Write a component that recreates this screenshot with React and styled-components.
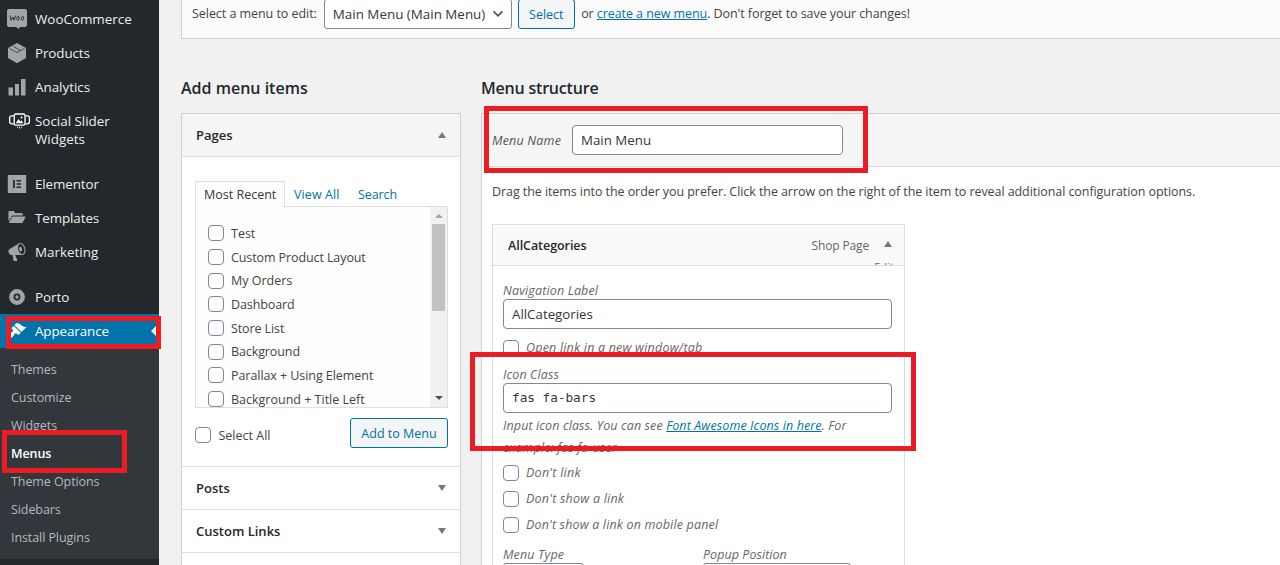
import styled, { createGlobalStyle, css } from "styled-components";

const GlobalStyle = createGlobalStyle`
  * {
    box-sizing: border-box;
  }

  body {
    margin: 0;
    background: #f1f1f1;
    color: #444;
    font-family: "Open Sans", "Noto Sans", sans-serif;
    font-size: 12.5px;
    line-height: 18px;
    overflow: hidden;
  }
`;

const Page = styled.div`
  position: relative;
  display: flex;
  width: 1280px;
  height: 565px;
  overflow: hidden;
`;

const Text = styled.span`
  letter-spacing: ${({ $ls }) => $ls || 0}px;
  white-space: nowrap;
`;

/* admin menu */

const Sidebar = styled.nav`
  flex: none;
  width: 159px;
  padding-top: 2px;
  background: #23282d;
`;

const MenuRow = styled.div`
  display: flex;
  align-items: flex-start;
  min-height: 34px;
  padding: 8px 0;
  color: #eee;
  font-size: 13.4px;
  line-height: 18px;

  svg {
    flex: none;
    width: 20px;
    height: 20px;
    margin: -1px 8px -1px 7px;
    fill: #a0a5aa;
    overflow: visible;
  }

  ${({ $current }) =>
    $current &&
    css`
      background: #0073aa;
      color: #fff;

      svg {
        fill: #fff;
      }

      &::after {
        content: "";
        align-self: center;
        margin-left: auto;
        border: 8px solid transparent;
        border-right-color: #f1f1f1;
        border-left: 0;
      }
    `}
`;

const Separator = styled.div`
  height: 11px;
`;

const Submenu = styled.div`
  height: 211px;
  padding: 8px 0 7px 11px;
  background: #32373c;
`;

const SubmenuItem = styled.div`
  color: ${({ $current }) => ($current ? "#fff" : "#b4b9be")};
  font-weight: ${({ $current }) => ($current ? 600 : 400)};
  line-height: 28px;
`;

/* content */

const Content = styled.main`
  flex: none;
  width: 1121px;
  padding-left: 22px;
`;

const ManageMenus = styled.div`
  display: flex;
  align-items: center;
  height: 39px;
  padding: 0 0 11px 10px;
  border: 1px solid #ccd0d4;
  border-top: 0;
  border-right: 0;
  background: #fbfbfb;
`;

const MenuSelect = styled.div`
  display: flex;
  align-items: center;
  justify-content: space-between;
  width: 188px;
  height: 30px;
  margin: 0 6px 0 7px;
  padding: 0 7px 0 8px;
  border: 1px solid #7e8993;
  border-radius: 3px;
  background: #fff;
  color: #32373c;
  font-size: 13.4px;

  svg {
    width: 12px;
    height: 8px;
    fill: none;
    stroke: #555;
    stroke-width: 2;
  }
`;

const Button = styled.div`
  width: ${({ $width }) => $width}px;
  height: 30px;
  border: 1px solid #0071a1;
  border-radius: 3px;
  background: #f3f5f6;
  color: #0071a1;
  line-height: 29px;
  text-align: center;
`;

const Link = styled.a`
  color: #0073aa;
  text-decoration: underline;
`;

const Columns = styled.div`
  display: flex;
  gap: 20px;
  padding-top: 38px;
`;

const Column = styled.section`
  flex: none;
  width: ${({ $width }) => $width}px;
`;

const Heading = styled.h2`
  margin: 0 0 14px;
  color: #23282d;
  font-size: 16px;
  font-weight: 600;
  line-height: 22px;
`;

const Accordion = styled.div`
  height: 470px;
  border: 1px solid #ccd0d4;
  background: #fff;
`;

const AccordionTitle = styled.div`
  display: flex;
  align-items: center;
  justify-content: space-between;
  height: 43px;
  padding: 0 14px;
  border-bottom: 1px solid #dfdfdf;
  background: ${({ $open }) => ($open ? "#f5f5f5" : "#fff")};
  color: #23282d;
  font-size: 13px;
  font-weight: 600;
`;

const Arrow = styled.i`
  border: 4px solid transparent;
  border-top: ${({ $up }) => ($up ? "0" : "6px solid #72777c")};
  border-bottom: ${({ $up }) => ($up ? "6px solid #72777c" : "0")};
`;

const AccordionBody = styled.div`
  height: 310px;
  padding: 24px 12px 0 13px;
  border-bottom: 1px solid #dfdfdf;
`;

const Tabs = styled.div`
  display: flex;
  height: 26px;
  line-height: 28px;
`;

const Tab = styled.div`
  width: ${({ $width }) => $width}px;
  padding-left: ${({ $current }) => ($current ? 8 : 9)}px;
  color: #0073aa;

  ${({ $current }) =>
    $current &&
    css`
      z-index: 1;
      height: 27px;
      border: 1px solid #dfdfdf;
      border-bottom: 0;
      background: #fdfdfd;
      color: #32373c;
      line-height: 26px;
    `}
`;

const TabPanel = styled.div`
  display: flex;
  justify-content: space-between;
  height: 202px;
  margin-top: -1px;
  border: 1px solid #dfdfdf;
  background: #fdfdfd;
  overflow: hidden;
`;

const PageList = styled.div`
  padding: 14.4px 0 0 12px;
`;

const PageOption = styled.label`
  display: flex;
  align-items: center;
  gap: 7px;
  height: 23.7px;

  span {
    padding-top: 1.4px;
  }
`;

const Checkbox = styled.i`
  flex: none;
  width: 16px;
  height: 16px;
  border: 1px solid #7e8993;
  border-radius: 4px;
  background: #fff;
`;

const Scrollbar = styled.div`
  display: flex;
  flex-direction: column;
  align-items: center;
  width: 17px;
  padding: 7px 0 7px;
  background: #f1f1f1;
`;

const ScrollArrow = styled.i`
  border: 4px solid transparent;
  border-top: ${({ $up }) => ($up ? "0" : "4px solid #505050")};
  border-bottom: ${({ $up }) => ($up ? "4px solid #a3a3a3" : "0")};
`;

const Thumb = styled.div`
  width: 13px;
  height: 87px;
  margin: 6px 0 auto;
  background: #c1c1c1;
`;

const AddRow = styled.div`
  display: flex;
  align-items: center;
  justify-content: space-between;
  margin-top: 10px;
`;

const SelectAll = styled.label`
  display: flex;
  align-items: center;
  gap: 7.5px;
  padding-top: 4px;

  span {
    padding-top: 1px;
  }
`;

/* menu editor */

const Editor = styled.div`
  height: 470px;
  border: 1px solid #ccd0d4;
  border-right: 0;
  background: #fff;
`;

const EditorHeader = styled.div`
  display: flex;
  align-items: center;
  height: 53px;
  padding-left: 10px;
  border-bottom: 1px solid #ddd;
  background: #f5f5f5;
  color: #555;
  font-style: italic;
`;

const NameLabel = styled.div`
  width: 80px;
  padding-top: 2px;
`;

const Input = styled.div`
  width: ${({ $width }) => $width}px;
  height: 30px;
  padding-left: 8px;
  border: 1px solid #7e8993;
  border-radius: 4px;
  background: #fff;
  color: #32373c;
  font-family: ${({ $code }) => ($code ? '"DejaVu Sans Mono", monospace' : "inherit")};
  font-size: ${({ $code }) => ($code ? 12.7 : 13.3)}px;
  font-style: normal;
  line-height: ${({ $code }) => ($code ? 27 : 28)}px;
`;

const EditorBody = styled.div`
  padding: 16px 0 0 10px;
`;

const Intro = styled.p`
  margin: 0 0 23px;
`;

const MenuItem = styled.div`
  width: 413px;
  height: 360px;
  border: 1px solid #ddd;
`;

const MenuItemBar = styled.div`
  display: flex;
  align-items: center;
  height: 41px;
  padding: 0 12px 0 15px;
  border-bottom: 1px solid #ddd;
  background: #fafafa;
  color: #23282d;
  font-weight: 600;

  > span {
    padding-top: 2px;
  }
`;

const ItemType = styled.span`
  margin: 0 15px 0 auto;
  color: #666;
  font-size: 12px;
  font-weight: 400;
`;

const ItemToggle = styled.div`
  display: flex;
  flex-direction: column;
  align-items: center;
  justify-content: space-between;
  align-self: stretch;
  width: 8px;
  padding-top: 16px;
  color: #666;
  font-weight: 400;
`;

const ToggleLabel = styled.span`
  height: 3px;
  margin-right: 8px;
  font-size: 11px;
  line-height: 10px;
  overflow: hidden;
`;

const Settings = styled.div`
  padding: 16px 9px 0 10px;
  color: #666;
  font-style: italic;
`;

const FieldLabel = styled.div`
  height: 17px;
`;

const Option = styled.label`
  display: flex;
  align-items: center;
  gap: 7px;
  height: ${({ $height }) => $height}px;
`;

const Help = styled.div`
  height: 47px;
  padding-top: 2px;
  line-height: 22px;
`;

const FieldRow = styled.div`
  display: flex;
  padding-top: 8px;
`;

const HalfField = styled.div`
  flex: none;
  width: 200px;
`;

const SmallSelect = styled.div`
  width: ${({ $width }) => $width}px;
  height: 28px;
  border: 1px solid #7e8993;
  border-radius: 3px;
`;

const Highlight = styled.div`
  position: absolute;
  z-index: 2;
  left: ${({ $x }) => $x}px;
  top: ${({ $y }) => $y}px;
  width: ${({ $w }) => $w}px;
  height: ${({ $h }) => $h}px;
  border: 5px solid #ed1c24;
`;

const icons = {
  woo: (
    <svg viewBox="0 0 20 20">
      <path d="M2 0h16a2 2 0 0 1 2 2v14a2 2 0 0 1-2 2h-5l-1 2-3-2H2a2 2 0 0 1-2-2V2a2 2 0 0 1 2-2z" />
      <path
        d="M3 6.500l1.100 4.800 1.900-3.300 1 3.300 1.700-4.800M10.600 11.200a1.200 1.900 10 1 0 .3-3.700 1.200 1.900 10 0 0-.3 3.700zM15.100 11.200a1.200 1.900 10 1 0 .3-3.700 1.200 1.900 10 0 0-.3 3.700z"
        fill="none"
        stroke="#23282d"
        strokeWidth="0.900"
      />
    </svg>
  ),
  products: (
    <svg viewBox="0 0 20 20">
      <path d="M10 0l9 5v10l-9 5.200L1 15V5z" />
      <path d="M2.500 5.500l7.500 4 7.500-4M6.200 3.300l7.500 4.200" fill="none" stroke="#23282d" strokeWidth="0.700" />
    </svg>
  ),
  analytics: (
    <svg viewBox="0 0 20 20">
      <path d="M1.500 10.500h4.500v8H1.500zM8 7h4v11.500H8zM14 2h4.500v16.500H14z" />
    </svg>
  ),
  slider: (
    <svg viewBox="0 0 20 20">
      <g fill="none" stroke="#fff" strokeWidth="1.300">
        <rect x="7.200" y="3" width="10.800" height="11.200" rx="1.500" />
        <path d="M7 4.800H4.700a2 2 0 0 0-2 2v4a2 2 0 0 0 2 2H7M18.200 4.800h2.200a2 2 0 0 1 2 2v4a2 2 0 0 1-2 2h-2.200" />
      </g>
      <path d="M8.800 12.300l2.700-4.300 1.900 2.400 1-1.200 2 3.100z" fill="#fff" />
      <circle cx="14.500" cy="6.500" r="1" fill="#fff" />
      <path d="M10 15.800h1v1h-1zM12.100 15.800h1v1.700h-1zM14.200 15.800h1v1h-1z" fill="#fff" />
    </svg>
  ),
  elementor: (
    <svg viewBox="0 0 20 20">
      <path d="M.8 1h18.400v18H.8z" />
      <path d="M6 6h1.800v8H6zM9.500 6H14v1.500H9.500zM9.500 9.200H14v1.500H9.500zM9.500 12.500H14V14H9.500z" fill="#23282d" />
    </svg>
  ),
  templates: (
    <svg viewBox="0 0 20 20">
      <path d="M1.500 13.500V3.800c0-.5.3-.8.800-.8h4.500l1.500 2H15c.5 0 .8.300.8.800V7.500H6.500c-1 0-1.600.400-2 1z" />
      <path d="M6.300 8.500H18.700l-2.800 5.800c-.3.500-.6.700-1.100.700H1.800l3-5.700c.3-.5.800-.8 1.500-.8z" />
    </svg>
  ),
  marketing: (
    <svg viewBox="0 0 20 20">
      <path d="M18.150 5.940c.46 1.620.38 3.220-.02 4.480-.42 1.280-1.260 2.180-2.300 2.480-.16.060-.26.060-.4.060-.06.020-.12.020-.18.020-.06.020-.14.020-.22.020h-6.800l2.220 5.500c.02.140-.06.260-.14.340-.08.100-.24.160-.34.160H6.950c-.1 0-.26-.06-.34-.16-.08-.08-.16-.2-.14-.34l-1-5.500H4.250l-.02-.02c-.5.060-1.080-.18-1.540-.62s-.88-1.080-1.060-1.880c-.24-.8-.2-1.560-.02-2.200.18-.62.580-1.080 1.060-1.300l.02-.02 9-5.400c.1-.06.180-.1.240-.16.060-.04.140-.08.240-.12.160-.08.280-.12.500-.18 1.040-.3 2.240.1 3.220.98s1.840 2.240 2.260 3.860zm-2.580 5.980h-.02c.4-.1.740-.34 1.040-.7.580-.7.860-1.760.860-3.040 0-.64-.1-1.300-.28-1.980-.34-1.360-1.020-2.500-1.780-3.240s-1.680-1.100-2.460-.88c-.82.220-1.400.960-1.700 2-.32 1.040-.28 2.360.060 3.720.380 1.360 1 2.500 1.800 3.240.780.740 1.620 1.100 2.480.880zm-2.540-7.080c.220-.04.420-.02.620.040.380.160.760.480 1.020 1s.42 1.200.42 1.780c0 .300-.04.560-.12.800-.18.480-.44.840-.86.940-.34.100-.8-.06-1.140-.4s-.64-.86-.78-1.500c-.18-.62-.12-1.240.020-1.720s.480-.84.820-.94z" />
    </svg>
  ),
  porto: (
    <svg viewBox="0 0 20 20">
      <circle cx="10" cy="10" r="5.700" fill="none" stroke="#a0a5aa" strokeWidth="4.500" />
      <circle cx="10" cy="10" r="1.700" />
    </svg>
  ),
  appearance: (
    <svg viewBox="0 0 20 20">
      <path d="M14.480 11.060L7.410 3.990l1.500-1.500c.5-.56 2.300-.47 3.510.32 1.210.8 1.430 1.280 2.910 2.100 1.180.64 2.450 1.260 4.450.85zm-.71.710L6.700 4.700 4.930 6.470c-.39.39-.39 1.020 0 1.410l1.060 1.060c.39.39.39 1.030 0 1.420-.6.6-1.430 1.110-2.210 1.690-.35.260-.7.530-1.010.84C1.430 14.230.4 16.080 1.400 17.070c.99 1 2.840-.03 4.180-1.360.31-.31.580-.66.850-1.020.57-.78 1.080-1.610 1.690-2.210.39-.39 1.020-.39 1.410 0l1.060 1.060c.39.39 1.020.39 1.410 0z" />
    </svg>
  ),
};

const subItems = ["Themes", "Customize", "Widgets", "Menus", "Theme Options", "Sidebars", "Install Plugins"];

const pages = [
  ["Test", 0],
  ["Custom Product Layout", -0.1],
  ["My Orders", 0],
  ["Dashboard", -0.1],
  ["Store List", -0.1],
  ["Background", -0.1],
  ["Parallax + Using Element", -0.06],
  ["Background + Title Left", 0],
];

const AdminMenu = () => (
  <Sidebar>
    <MenuRow>{icons.woo}<Text>WooCommerce</Text></MenuRow>
    <MenuRow>{icons.products}<Text $ls={-0.1}>Products</Text></MenuRow>
    <MenuRow>{icons.analytics}<Text>Analytics</Text></MenuRow>
    <MenuRow>{icons.slider}<Text>Social Slider<br />Widgets</Text></MenuRow>
    <Separator />
    <MenuRow>{icons.elementor}<Text $ls={-0.1}>Elementor</Text></MenuRow>
    <MenuRow>{icons.templates}<Text $ls={-0.1}>Templates</Text></MenuRow>
    <MenuRow>{icons.marketing}<Text>Marketing</Text></MenuRow>
    <Separator />
    <MenuRow>{icons.porto}<Text>Porto</Text></MenuRow>
    <MenuRow $current>{icons.appearance}<Text $ls={-0.1}>Appearance</Text></MenuRow>
    <Submenu>
      {subItems.map((name) => (
        <SubmenuItem key={name} $current={name === "Menus"}>
          <Text $ls={-0.08}>{name}</Text>
        </SubmenuItem>
      ))}
    </Submenu>
  </Sidebar>
);

const AddItems = () => (
  <Column $width={280}>
    <Heading><Text>Add menu items</Text></Heading>
    <Accordion>
      <AccordionTitle $open><Text>Pages</Text><Arrow $up /></AccordionTitle>
      <AccordionBody>
        <Tabs>
          <Tab $current $width={90}><Text>Most Recent</Text></Tab>
          <Tab $width={64}><Text $ls={0.1}>View All</Text></Tab>
          <Tab $width={60}><Text $ls={-0.1}>Search</Text></Tab>
        </Tabs>
        <TabPanel>
          <PageList>
            {pages.map(([name, ls]) => (
              <PageOption key={name}><Checkbox /><Text $ls={ls}>{name}</Text></PageOption>
            ))}
          </PageList>
          <Scrollbar><ScrollArrow $up /><Thumb /><ScrollArrow /></Scrollbar>
        </TabPanel>
        <AddRow>
          <SelectAll><Checkbox /><Text>Select All</Text></SelectAll>
          <Button $width={98}><Text>Add to Menu</Text></Button>
        </AddRow>
      </AccordionBody>
      <AccordionTitle><Text>Posts</Text><Arrow /></AccordionTitle>
      <AccordionTitle><Text>Custom Links</Text><Arrow /></AccordionTitle>
    </Accordion>
  </Column>
);

const MenuStructure = () => (
  <Column $width={799}>
    <Heading><Text $ls={-0.2}>Menu structure</Text></Heading>
    <Editor>
      <EditorHeader>
        <NameLabel><Text $ls={0.2}>Menu Name</Text></NameLabel>
        <Input $width={271}><Text>Main Menu</Text></Input>
      </EditorHeader>
      <EditorBody>
        <Intro>
          <Text $ls={-0.072}>
            Drag the items into the order you prefer. Click the arrow on the right of the item to
            reveal additional configuration options.
          </Text>
        </Intro>
        <MenuItem>
          <MenuItemBar>
            <Text $ls={-0.06}>AllCategories</Text>
            <ItemType><Text $ls={-0.15}>Shop Page</Text></ItemType>
            <ItemToggle><Arrow $up /><ToggleLabel>Edit</ToggleLabel></ItemToggle>
          </MenuItemBar>
          <Settings>
            <FieldLabel><Text $ls={0.15}>Navigation Label</Text></FieldLabel>
            <Input $width={389}><Text>AllCategories</Text></Input>
            <Option $height={37}><Checkbox /><Text $ls={0.2}>Open link in a new window/tab</Text></Option>
            <FieldLabel><Text $ls={0.1}>Icon Class</Text></FieldLabel>
            <Input $width={389} $code>fas fa-bars</Input>
            <Help>
              <Text $ls={0.11}>
                Input icon class. You can see <Link>Font Awesome Icons in here</Link>. For
                <br />
                example: fas fa-user
              </Text>
            </Help>
            <Option $height={26}><Checkbox /><Text $ls={0.25}>Don't link</Text></Option>
            <Option $height={26}><Checkbox /><Text $ls={0.22}>Don't show a link</Text></Option>
            <Option $height={26}><Checkbox /><Text $ls={0.16}>Don't show a link on mobile panel</Text></Option>
            <FieldRow>
              <HalfField>
                <FieldLabel><Text $ls={0.15}>Menu Type</Text></FieldLabel>
                <SmallSelect $width={81} />
              </HalfField>
              <HalfField>
                <FieldLabel><Text $ls={0.05}>Popup Position</Text></FieldLabel>
                <SmallSelect $width={148} />
              </HalfField>
            </FieldRow>
          </Settings>
        </MenuItem>
      </EditorBody>
    </Editor>
  </Column>
);

const App = () => (
  <>
    <GlobalStyle />
    <Page>
      <AdminMenu />
      <Content>
        <ManageMenus>
          <Text $ls={-0.05}>Select a menu to edit:</Text>
          <MenuSelect>
            <Text>Main Menu (Main Menu)</Text>
            <svg viewBox="0 0 13 9"><path d="M1.500 1.500l5 5 5-5" /></svg>
          </MenuSelect>
          <Button $width={57}><Text>Select</Text></Button>
          <Text $ls={-0.07}>&nbsp; or <Link>create a new menu</Link>. Don't forget to save your changes!</Text>
        </ManageMenus>
        <Columns>
          <AddItems />
          <MenuStructure />
        </Columns>
      </Content>
      <Highlight $x={6} $y={316} $w={155} $h={33} />
      <Highlight $x={2} $y={430} $w={125} $h={43} />
      <Highlight $x={484} $y={106} $w={384} $h={67} />
      <Highlight $x={470} $y={352} $w={446} $h={99} />
    </Page>
  </>
);

export default App;
